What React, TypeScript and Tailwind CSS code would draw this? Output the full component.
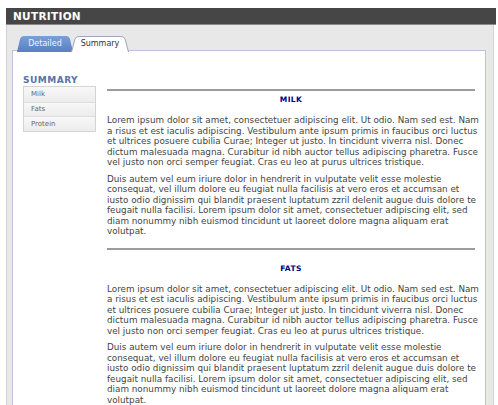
import React from 'react'

const milk1 =
  'Lorem ipsum dolor sit amet, consectetuer adipiscing elit. Ut odio. Nam sed est. Nam a risus et est iaculis adipiscing. Vestibulum ante ipsum primis in faucibus orci luctus et ultrices posuere cubilia Curae; Integer ut justo. In tincidunt viverra nisl. Donec dictum malesuada magna. Curabitur id nibh auctor tellus adipiscing pharetra. Fusce vel justo non orci semper feugiat. Cras eu leo at purus ultrices tristique.'
const milk2 =
  'Duis autem vel eum iriure dolor in hendrerit in vulputate velit esse molestie consequat, vel illum dolore eu feugiat nulla facilisis at vero eros et accumsan et iusto odio dignissim qui blandit praesent luptatum zzril delenit augue duis dolore te feugait nulla facilisi. Lorem ipsum dolor sit amet, consectetuer adipiscing elit, sed diam nonummy nibh euismod tincidunt ut laoreet dolore magna aliquam erat volutpat.'

const sections = [
  { title: 'MILK', hrTop: 'mt-0', titleTop: 'mt-[4px]' },
  { title: 'FATS', hrTop: 'mt-[11px]', titleTop: 'mt-[14px]' },
]

function Tab({ label, active }: { label: string; active?: boolean }) {
  return (
    <div className={`relative h-[15px] flex items-center justify-center ${active ? 'w-[58px] -ml-[2px] z-10' : 'w-[56px]'}`}>
      <svg className="absolute inset-0" width={active ? 58 : 56} height={16} viewBox={active ? '0 0 58 16' : '0 0 56 16'}>
        <defs>
          <linearGradient id="blueTab" x1="0" y1="0" x2="0" y2="1">
            <stop offset="0" stopColor="#7c9fd6" />
            <stop offset="1" stopColor="#5580c2" />
          </linearGradient>
        </defs>
        {active ? (
          <path
            d="M0.5,16 L4,3 Q5,0.5 8,0.5 L50,0.5 Q53,0.5 54,3 L57.5,16"
            fill="#ffffff"
            stroke="#9ea6ba"
            strokeWidth="1"
          />
        ) : (
          <path d="M0,16 L3,3 Q4,0 7,0 L49,0 Q52,0 53,3 L56,16 Z" fill="url(#blueTab)" />
        )}
      </svg>
      <span className={`relative text-[8px] mt-[1px] ${active ? 'text-[#333]' : 'text-[#eef3fb]'}`}>{label}</span>
    </div>
  )
}

export default function App() {
  return (
    <div className="w-[498px] h-[405px] overflow-hidden bg-white pt-[8px] font-['DejaVu_Sans',Verdana,sans-serif]">
      <div className="ml-[6px] w-[490px] h-[17px] bg-[#464646] border-b border-[#8a8a8a] pl-[7px] flex items-center">
        <span className="text-white font-bold text-[10.5px] tracking-[0.3px] leading-none">NUTRITION</span>
      </div>
      <div className="ml-[6px] w-[488px] h-[400px] bg-[#e8e8e8] border-l border-r border-[#d2d2d2] pl-[5px] pt-[11px]">
        <div className="flex pl-[5px] relative z-10 -mb-[1px]">
          <Tab label="Detailed" />
          <Tab label="Summary" active />
        </div>
        <div className="w-[474px] h-[400px] bg-white border border-[#bcc2da] flex">
          <div className="w-[84px] shrink-0 pl-[10px] pt-[24px]">
            <div className="text-[9px] font-bold text-[#5674a8] tracking-[0.5px] leading-[10px]">SUMMARY</div>
            <div className="mt-[1px] w-[73px] border border-[#d4d4d4] bg-[#f3f3f3]">
              {['Milk', 'Fats', 'Protein'].map((item, i) => (
                <div
                  key={item}
                  className={`h-[14.5px] pl-[7px] flex items-center text-[7px] text-[#666] bg-gradient-to-b from-[#f8f8f8] to-[#ececec] ${i > 0 ? 'border-t border-[#dedede]' : ''}`}
                >
                  {item}
                </div>
              ))}
            </div>
          </div>
          <div className="ml-[10px] w-[368px] pt-[38px]">
            {sections.map((s) => (
              <div key={s.title}>
                <div className={`${s.hrTop} h-[2px] bg-[#9c9c9c]`} />
                <div className={`${s.titleTop} text-center text-[7.5px] leading-[9px] font-bold tracking-[0.4px] text-[#000080]`}>
                  {s.title}
                </div>
                <p className="mt-[11px] w-[373px] text-[8.8px] leading-[10.5px] text-[#444]">{milk1}</p>
                <p className="mt-[6px] w-[373px] text-[8.8px] leading-[10.5px] text-[#444]">{milk2}</p>
              </div>
            ))}
          </div>
        </div>
      </div>
    </div>
  )
}
